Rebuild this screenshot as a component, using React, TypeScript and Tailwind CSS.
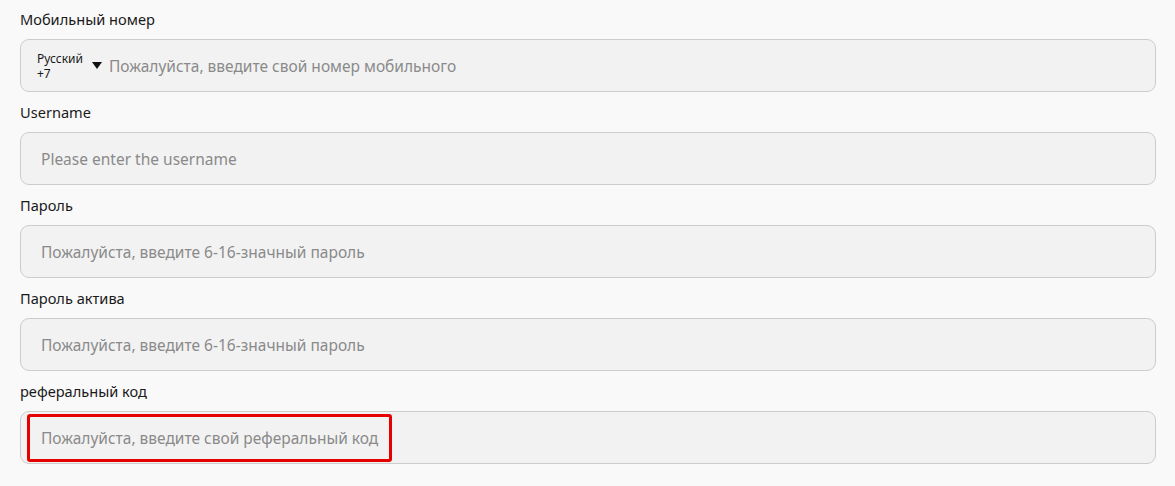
import React from 'react';

const font = { fontFamily: '"Noto Sans", "Open Sans", Arial, sans-serif' };

type Field = {
  label: string;
  placeholder: string;
  phone?: boolean;
  highlight?: boolean;
};

const fields: Field[] = [
  { label: 'Мобильный номер', placeholder: 'Пожалуйста, введите свой номер мобильного', phone: true },
  { label: 'Username', placeholder: 'Please enter the username' },
  { label: 'Пароль', placeholder: 'Пожалуйста, введите 6-16-значный пароль' },
  { label: 'Пароль актива', placeholder: 'Пожалуйста, введите 6-16-значный пароль' },
  { label: 'реферальный код', placeholder: 'Пожалуйста, введите свой реферальный код', highlight: true },
];

export default function App() {
  return (
    <div className="w-[1175px] h-[486px] bg-[#f9f9f9] pl-5 pr-[19px] overflow-hidden" style={font}>
      {fields.map((f) => (
        <div key={f.label}>
          <div className="h-[39px] flex items-center pt-px text-[14.6px] text-[#1a1a1a]">{f.label}</div>
          <div className="h-[54px] pb-px">
            <div className="h-[53px] rounded-[9px] border border-[#cccccc] bg-[#f2f2f2] flex items-center">
              {f.phone ? (
                <div className="flex items-center pl-[16px]">
                  <div className="flex flex-col text-[12px] leading-[15px] text-[#1a1a1a] pt-px">
                    <span>Русский</span>
                    <span>+7</span>
                  </div>
                  <svg width="10" height="7" viewBox="0 0 10 7" className="ml-[9px] mr-[7px]">
                    <path d="M0 0 L10 0 L5 7 Z" fill="#111" />
                  </svg>
                  <span className="pt-[2px] text-[15.5px] text-[#8a8a8a] whitespace-nowrap">{f.placeholder}</span>
                </div>
              ) : f.highlight ? (
                <div className="ml-[6px] h-[48px] w-[365px] border-[3px] border-[#e60000] rounded-[3px] flex items-center pl-[11px]">
                  <span className="pt-[2px] text-[15.5px] text-[#8a8a8a] whitespace-nowrap">{f.placeholder}</span>
                </div>
              ) : (
                <span className="pl-5 pt-[2px] text-[15.5px] text-[#8a8a8a] whitespace-nowrap">{f.placeholder}</span>
              )}
            </div>
          </div>
        </div>
      ))}
    </div>
  );
}
